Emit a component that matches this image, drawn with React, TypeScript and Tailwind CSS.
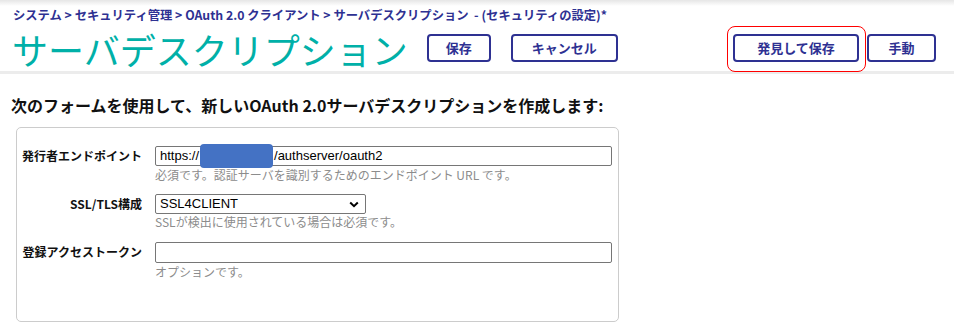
import React from "react";

const navy = "text-[#2e3192]";

function Btn({ children, w }: { children: React.ReactNode; w: string }) {
  return (
    <div
      className={`${w} h-[28px] flex items-center justify-center border-2 border-[#2e3192] rounded-[4px] bg-white text-[13px] font-bold ${navy}`}
    >
      {children}
    </div>
  );
}

export default function App() {
  return (
    <div
      className="w-[954px] h-[330px] bg-white relative overflow-hidden"
      style={{ fontFamily: '"Liberation Sans", "Noto Sans CJK JP", sans-serif' }}
    >
      <div className="absolute top-0 left-0 right-0 h-[6px] bg-gradient-to-b from-[#e6e6e6] to-white" />
      {/* header */}
      <div className="relative">
        <div
          className={`pl-[13px] pt-[6px] h-[24px] text-[12.3px] leading-[18px] font-bold ${navy}`}
          style={{ fontFamily: '"Noto Sans CJK JP", sans-serif' }}
        >
          システム &gt; セキュリティ管理 &gt; OAuth 2.0 クライアント &gt; サーバデスクリプション &nbsp;- (セキュリティの設定)*
        </div>
        <div className="flex items-center h-[47px] pr-[18px]">
          <div
            className="ml-[12px] text-[36px] leading-[40px] text-[#00b0a8] font-normal mt-[2px]"
            style={{ fontFamily: '"Noto Sans CJK JP", sans-serif' }}
          >
            サーバデスクリプション
          </div>
          <div className="ml-[19px] flex gap-[20px]" style={{ fontFamily: '"Noto Sans CJK JP", sans-serif' }}>
            <Btn w="w-[64px]">保存</Btn>
            <Btn w="w-[107px]">キャンセル</Btn>
          </div>
          <div className="ml-auto flex gap-[8px]" style={{ fontFamily: '"Noto Sans CJK JP", sans-serif' }}>
            <div className="relative">
              <Btn w="w-[126px]">発見して保存</Btn>
              <div className="absolute left-[-6px] top-[-8px] w-[139px] h-[46px] border border-[#ff0000] rounded-[8px] pointer-events-none" />
            </div>
            <Btn w="w-[69px]">手動</Btn>
          </div>
        </div>
        <div className="h-[3px] bg-[#ececec]" />
      </div>

      {/* heading */}
      <div
        className="mt-[21px] ml-[11px] text-[16px] leading-[20px] font-bold text-[#111]"
        style={{ fontFamily: '"Noto Sans CJK JP", sans-serif' }}
      >
        次のフォームを使用して、新しいOAuth 2.0サーバデスクリプションを作成します:
      </div>

      {/* form box */}
      <div className="mt-[12px] ml-[16px] w-[603px] h-[195px] border border-[#cccccc] rounded-[5px] pt-[18px]">
        {/* row 1 */}
        <div className="flex">
          <div
            className="w-[125px] text-right text-[12px] leading-[20px] font-bold text-[#111]"
            style={{ fontFamily: '"Noto Sans CJK JP", sans-serif' }}
          >
            発行者エンドポイント
          </div>
          <div className="ml-[13px]">
            <div className="relative w-[457px] h-[20px] border border-[#767676] rounded-[2px] flex items-center pl-[4px] text-[13px] text-black">
              <span>https://</span>
              <span className="inline-block w-[75px]" />
              <span>/authserver/oauth2</span>
              <div className="absolute left-[44px] top-[-3px] w-[73px] h-[24px] bg-[#4472c4] rounded-[4px]" />
            </div>
            <div
              className="mt-[2px] text-[12px] leading-[14px] text-[#8c8c8c]"
              style={{ fontFamily: '"Noto Sans CJK JP", sans-serif' }}
            >
              必須です。認証サーバを識別するためのエンドポイント URL です。
            </div>
          </div>
        </div>

        {/* row 2 */}
        <div className="flex mt-[12px]">
          <div
            className="w-[125px] text-right text-[12px] leading-[20px] font-bold text-[#111]"
            style={{ fontFamily: '"Noto Sans CJK JP", sans-serif' }}
          >
            SSL/TLS構成
          </div>
          <div className="ml-[13px]">
            <div className="w-[211px] h-[20px] border border-[#767676] rounded-[2px] flex items-center justify-between pl-[4px] pr-[6px] text-[13px] text-black">
              <span>SSL4CLIENT</span>
              <svg width="10" height="7" viewBox="0 0 10 7">
                <path d="M1.2 1.5 L5 5.2 L8.8 1.5" fill="none" stroke="#000" strokeWidth="2" />
              </svg>
            </div>
            <div
              className="mt-[1px] text-[12px] leading-[14px] text-[#8c8c8c]"
              style={{ fontFamily: '"Noto Sans CJK JP", sans-serif' }}
            >
              SSLが検出に使用されている場合は必須です。
            </div>
          </div>
        </div>

        {/* row 3 */}
        <div className="flex mt-[13px]">
          <div
            className="w-[125px] text-right text-[12px] leading-[20px] font-bold text-[#111]"
            style={{ fontFamily: '"Noto Sans CJK JP", sans-serif' }}
          >
            登録アクセストークン
          </div>
          <div className="ml-[13px]">
            <div className="w-[457px] h-[21px] border border-[#767676] rounded-[2px]" />
            <div
              className="mt-[2px] text-[12px] leading-[14px] text-[#8c8c8c]"
              style={{ fontFamily: '"Noto Sans CJK JP", sans-serif' }}
            >
              オプションです。
            </div>
          </div>
        </div>
      </div>
    </div>
  );
}
